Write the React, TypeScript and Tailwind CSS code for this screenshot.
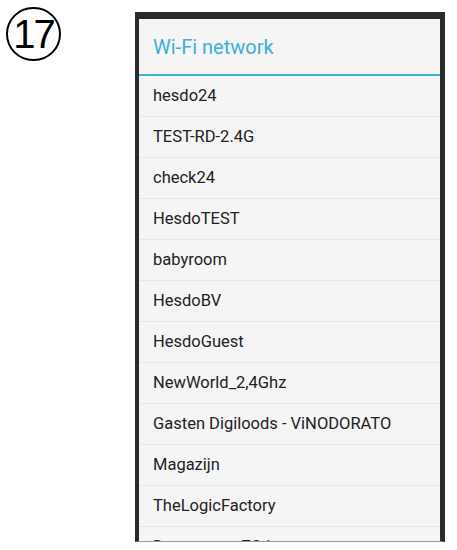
const networks = [
  "hesdo24",
  "TEST-RD-2.4G",
  "check24",
  "HesdoTEST",
  "babyroom",
  "HesdoBV",
  "HesdoGuest",
  "NewWorld_2,4Ghz",
  "Gasten Digiloods - ViNODORATO",
  "Magazijn",
  "TheLogicFactory",
  "Dxxxxxxxxx 7G internet",
];

export default function App() {
  return (
    <div className="relative w-[457px] h-[550px] bg-white overflow-hidden" style={{ fontFamily: "Roboto, 'Liberation Sans', sans-serif" }}>
      {/* step number */}
      <div className="absolute left-[6px] top-[7px] w-[55px] h-[54px] rounded-full border-[2.5px] border-black flex items-center justify-center">
        <span className="text-[40px] leading-none text-black tracking-[-2px]" style={{ fontFamily: "'Liberation Sans', Arial, sans-serif" }}>
          17
        </span>
      </div>

      {/* phone dialog */}
      <div className="absolute left-[135px] top-[12px] w-[310px] h-[530px] border-l-4 border-t-[7px] border-r-[5px] border-b border-l-[#2b2b2b] border-t-[#2b2b2b] border-r-[#2b2b2b] border-b-[#9a9a9a] bg-[#f5f5f5] overflow-hidden">
        <div className="h-[57px] flex items-center pl-[14px] border-b-2 border-[#3db3d9]">
          <span className="text-[20px] text-[#3cb0d8] pt-[1px]">Wi-Fi network</span>
        </div>
        <ul>
          {networks.map((n, i) => (
            <li
              key={i}
              className="h-[41px] flex items-center pl-[14px] text-[16.5px] text-[#222] border-b border-[#e6e6e6]"
            >
              {n}
            </li>
          ))}
        </ul>
      </div>
    </div>
  );
}
